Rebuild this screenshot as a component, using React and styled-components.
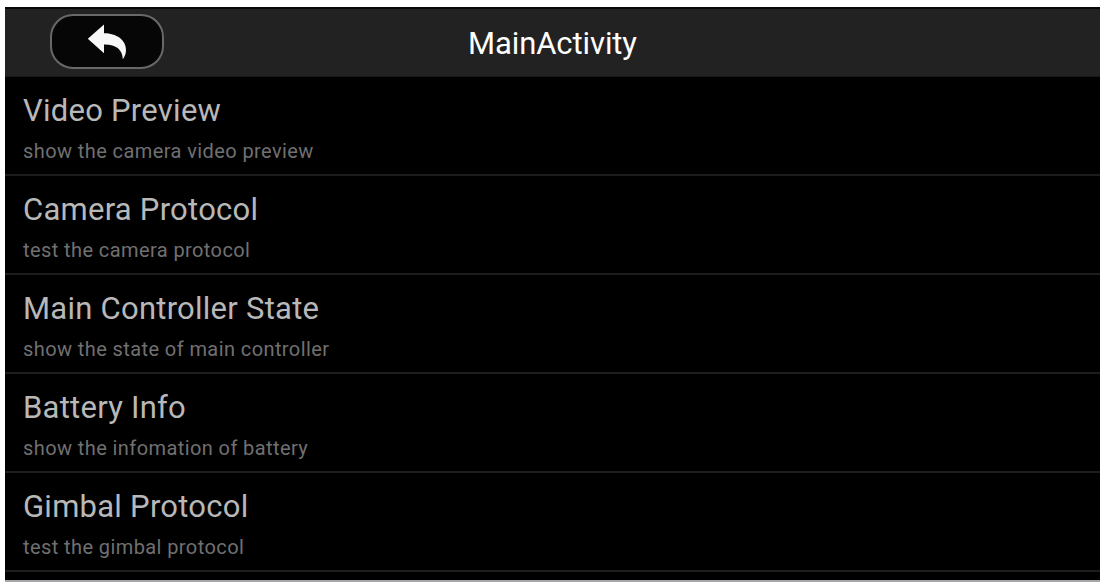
import React from "react";
import styled, { createGlobalStyle } from "styled-components";

const GlobalStyle = createGlobalStyle`
  * { box-sizing: border-box; }
  body { margin: 0; background: #fff; font-family: Roboto, "Liberation Sans", sans-serif; }
`;

const Page = styled.div`
  width: 1105px;
  height: 587px;
  padding: 7px 5px 5px;
  overflow: hidden;
`;

const Screen = styled.main`
  height: 575px;
  background: #000;
  border-bottom: 2px solid #a6a6aa;
  overflow: hidden;
`;

const Header = styled.header`
  display: grid;
  grid-template-columns: 204px 1fr 204px;
  align-items: start;
  height: 70px;
  background: #222;
  border-top: 2px solid #08080b;
  border-bottom: 1px solid #191919;
`;

const BackButton = styled.button`
  display: flex;
  align-items: center;
  justify-content: center;
  width: 114px;
  height: 55px;
  margin: 5px 0 0 45px;
  padding: 0;
  background: #060606;
  border: 2px solid #686868;
  border-radius: 23px;
`;

const Title = styled.h1`
  margin: 0;
  text-align: center;
  font-size: 31px;
  line-height: 36px;
  font-weight: 400;
  letter-spacing: -0.1px;
  color: #fff;
  padding-top: 17px;
`;

const List = styled.ul`
  margin: 0;
  padding: 0;
  list-style: none;
`;

const Item = styled.li`
  height: 99px;
  padding: 16px 18px 0;
  border-bottom: 2px solid #1d1d1d;
`;

const ItemTitle = styled.div`
  font-size: 31px;
  line-height: 36px;
  letter-spacing: 0.25px;
  color: #b8b8b8;
`;

const ItemText = styled.div`
  margin-top: 10px;
  font-size: 20px;
  line-height: 24px;
  letter-spacing: 0.41px;
  color: #707070;
`;

const items = [
  ["Video Preview", "show the camera video preview"],
  ["Camera Protocol", "test the camera protocol"],
  ["Main Controller State", "show the state of main controller"],
  ["Battery Info", "show the infomation of battery"],
  ["Gimbal Protocol", "test the gimbal protocol"],
];

function BackIcon() {
  return (
    <svg width="40" height="36" viewBox="0 0 40 36" aria-hidden="true">
      <path
        d="M0.8 14.8 17 0.4V9.3C29.5 9.3 39 16 39 26C39 29.8 37.8 32.6 35.8 35.2C35.5 25.5 29.2 20.2 17 20.4V29.3Z"
        fill="#f7f7f7"
      />
    </svg>
  );
}

export default function App() {
  return (
    <Page>
      <GlobalStyle />
      <Screen>
        <Header>
          <BackButton aria-label="Back">
            <BackIcon />
          </BackButton>
          <Title>MainActivity</Title>
        </Header>
        <List>
          {items.map(([title, text]) => (
            <Item key={title}>
              <ItemTitle>{title}</ItemTitle>
              <ItemText>{text}</ItemText>
            </Item>
          ))}
        </List>
      </Screen>
    </Page>
  );
}
